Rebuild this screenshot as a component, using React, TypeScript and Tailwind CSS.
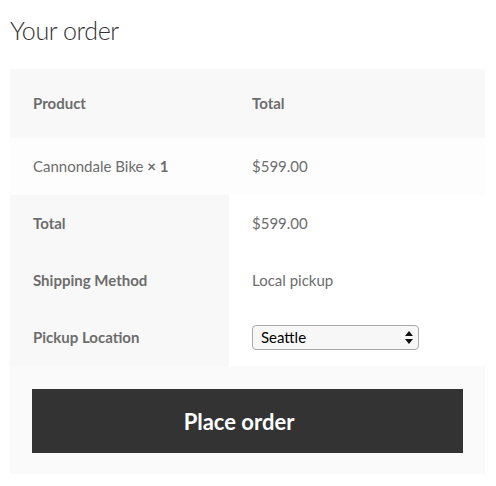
import React from 'react';

const rows = [
  { label: 'Total', value: '$599.00' },
  { label: 'Shipping Method', value: 'Local pickup' },
];

const App: React.FC = () => {
  return (
    <div className="w-[496px] h-[486px] bg-white pl-[10px] pr-[11px] pt-[12px] font-['Lato',sans-serif] text-[#6d6d6d]">
      <h3 className="text-[25px] leading-[36px] tracking-[-0.4px] font-light text-[#333333] mb-[21px]">Your order</h3>

      <table className="w-[475px] border-collapse text-[15px]">
        <thead>
          <tr className="bg-[#f8f8f8] h-[69px]">
            <th className="w-[219px] pl-[23px] text-left font-bold">Product</th>
            <th className="pl-[23px] text-left font-bold">Total</th>
          </tr>
        </thead>
        <tbody>
          <tr className="bg-[#fdfdfd] h-[57px]">
            <td className="pl-[23px]">
              Cannondale Bike <strong className="font-bold">× 1</strong>
            </td>
            <td className="pl-[23px]">$599.00</td>
          </tr>
        </tbody>
        <tfoot>
          {rows.map((row) => (
            <tr key={row.label} className="h-[57px]">
              <th className="bg-[#f8f8f8] pl-[23px] text-left font-bold">{row.label}</th>
              <td className="bg-white pl-[23px]">{row.value}</td>
            </tr>
          ))}
          <tr className="h-[57px]">
            <th className="bg-[#f8f8f8] pl-[23px] text-left font-bold">Pickup Location</th>
            <td className="bg-white pl-[23px]">
              <div className="relative w-[167px] h-[25px]">
                <select
                  defaultValue="Seattle"
                  className="appearance-none w-full h-full rounded-[4px] border border-[#a9a9a9] bg-[#f7f7f7] pl-[8px] text-[15px] text-black font-['Lato',sans-serif]"
                >
                  <option>Seattle</option>
                  <option>Portland</option>
                </select>
                <svg
                  className="absolute right-[6px] top-[6px] pointer-events-none"
                  width="8"
                  height="13"
                  viewBox="0 0 8 13"
                >
                  <path d="M4 0 L8 5 L0 5 Z" fill="#111" />
                  <path d="M0 8 L8 8 L4 13 Z" fill="#111" />
                </svg>
              </div>
            </td>
          </tr>
        </tfoot>
      </table>

      <div className="w-[475px] h-[108px] bg-[#fafafa] px-[22px] pt-[23px]">
        <button className="w-full h-[64px] bg-[#333333] text-white text-[22px] font-bold pr-[17px]">
          Place order
        </button>
      </div>
    </div>
  );
};

export default App;
